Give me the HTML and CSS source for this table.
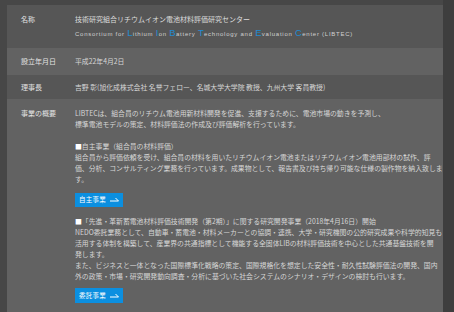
FILE: index.html
```html
<!DOCTYPE html>
<html lang="ja">
<head>
<meta charset="utf-8">
<title>LIBTEC 概要</title>
<link rel="stylesheet" href="styles.css">
</head>
<body>
<div class="page">
  <div class="table">
    <div class="row row-dark row-name">
      <div class="label">名称</div>
      <div class="value">
        <div class="name-ja">技術研究組合リチウムイオン電池材料評価研究センター</div>
        <div class="name-en">Consortium for <span class="ini">L</span>ithium <span class="ini">I</span>on <span class="ini">B</span>attery <span class="ini">T</span>echnology and <span class="ini">E</span>valuation <span class="ini">C</span>enter (LIBTEC)</div>
      </div>
    </div>
    <div class="row row-light">
      <div class="label">設立年月日</div>
      <div class="value">平成22年4月2日</div>
    </div>
    <div class="row row-dark row-tight">
      <div class="label">理事長</div>
      <div class="value">吉野 彰(旭化成株式会社 名誉フェロー、名城大学大学院 教授、九州大学 客員教授)</div>
    </div>
    <div class="row row-light row-business">
      <div class="label">事業の概要</div>
      <div class="value">
        <p class="para">LIBTECは、組合員のリチウム電池用新材料開発を促進、支援するために、電池市場の動きを予測し、<br>標準電池モデルの策定、材料評価法の作成及び評価解析を行っています。</p>
        <p class="para para-before-btn"><span class="sq">■</span>自主事業（組合員の材料評価）<br>組合員から評価依頼を受け、組合員の材料を用いたリチウムイオン電池またはリチウムイオン電池用部材の試作、評<br>価、分析、コンサルティング業務を行っています。成果物として、報告書及び持ち帰り可能な仕様の製作物を納入致しま<br>す。</p>
        <a class="btn" href="#">自主事業<svg class="arrow" width="9" height="5" viewBox="0 0 9 5"><path d="M0 4H8.5L5.5 1" fill="none" stroke="#fff" stroke-width="1"/></svg></a>
        <p class="para para-before-btn-sm"><span class="sq">■</span>「先進・革新蓄電池材料評価技術開発（第2期）」に関する研究開発事業（2018年4月16日）開始<br>NEDO委託業務として、自動車・蓄電池・材料メーカーとの協調・連携、大学・研究機関の公的研究成果や科学的知見も<br>活用する体制を構築して、産業界の共通指標として機能する全固体LIBの材料評価技術を中心とした共通基盤技術を開<br>発します。<br>また、ビジネスと一体となった国際標準化戦略の策定、国際規格化を想定した安全性・耐久性試験評価法の開発、国内<br>外の政策・市場・研究開発動向調査・分析に基づいた社会システムのシナリオ・デザインの検討も行います。</p>
        <a class="btn" href="#">委託事業<svg class="arrow" width="9" height="5" viewBox="0 0 9 5"><path d="M0 4H8.5L5.5 1" fill="none" stroke="#fff" stroke-width="1"/></svg></a>
      </div>
    </div>
  </div>
</div>
</body>
</html>
```
FILE: styles.css
```css
html {
  background: linear-gradient(to right, #474747 443px, #3e3e3e 443px);
}
body {
  margin: 0;
  font-family: "Noto Sans CJK JP", "Noto Sans", sans-serif;
  font-size: 6.85px;
  line-height: 11px;
  color: #d6d6d6;
}
.page {
  padding: 5px 11px 0 7px;
  height: 307px;
  overflow: hidden;
}
.table {
  display: flex;
  flex-direction: column;
}
.row {
  display: grid;
  grid-template-columns: 68px 1fr;
  padding: 8px 0;
}
.row-dark { background: #565656; }
.row-light { background: #626262; }
.row-name { padding: 9px 0 5.5px; }
.row-tight { padding: 7px 0 6.5px; }
.row-business { padding: 8.5px 0 40px; }
.label {
  padding-left: 14px;
  color: #e2e2e2;
  font-size: 7px;
}
.value {
  padding-right: 4px;
  white-space: nowrap;
}
.name-ja {
  color: #dcdcdc;
  font-size: 7px;
}
.name-en {
  font-family: "Liberation Sans", sans-serif;
  font-size: 6px;
  letter-spacing: 0.75px;
  line-height: 16px;
  color: #d0d0d0;
}
.ini {
  font-size: 9.5px;
  color: #1f8bd2;
  letter-spacing: 0.3px;
}
.para {
  margin: 0 0 11px;
}
.para-before-btn {
  margin-bottom: 8.2px;
}
.para-before-btn-sm {
  margin-bottom: 5.8px;
}
.sq {
  color: #ffffff;
}
.btn {
  display: flex;
  align-items: center;
  justify-content: center;
  gap: 4px;
  width: 48px;
  height: 14.5px;
  margin: 0 0 9.3px;
  background: #0b8fe0;
  color: #ffffff;
  font-size: 6.5px;
  letter-spacing: 0.3px;
  text-decoration: none;
}
.arrow {
  display: block;
}
```
